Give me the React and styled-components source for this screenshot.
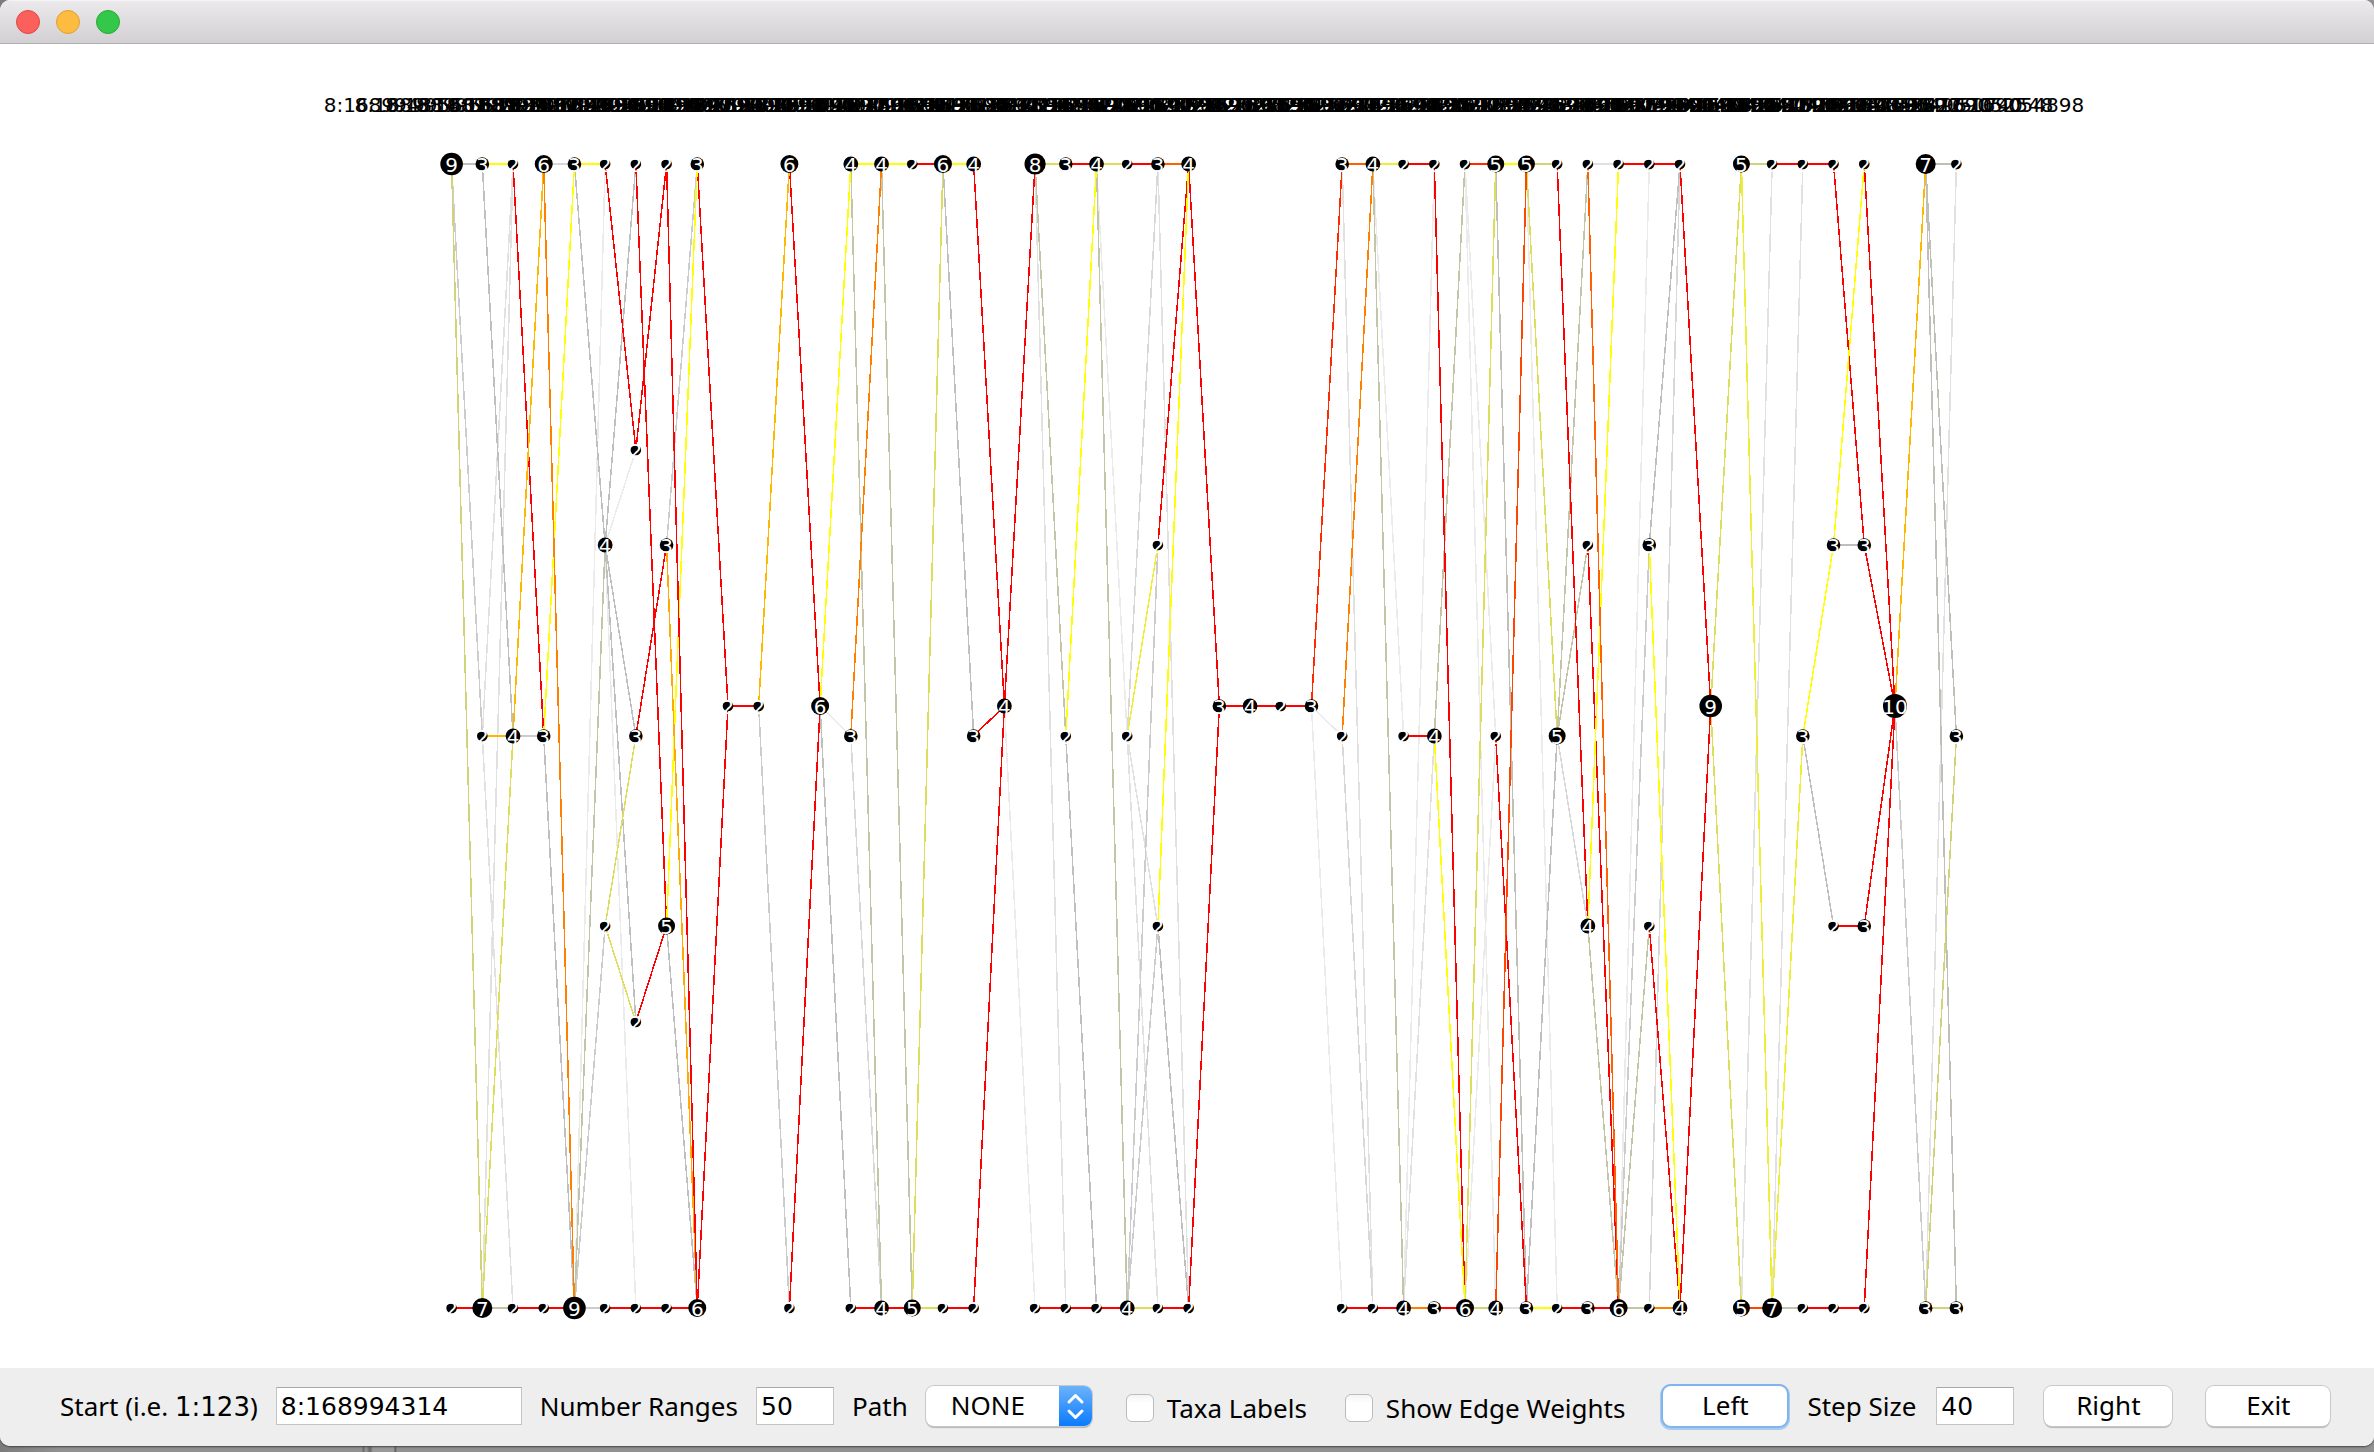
import React from "react";
import styled, { createGlobalStyle } from "styled-components";

const GlobalStyle = createGlobalStyle`
  * { box-sizing: border-box; }
  body { margin: 0; background: #8e8e8e; }
`;

const UI_FONT = '"Noto Sans", "Open Sans", sans-serif';
const DIGIT_FONT = '"DejaVu Sans", "Noto Sans", sans-serif';

const Desktop = styled.div`
  min-height: 100vh;
  padding-bottom: 6px;
  background: linear-gradient(90deg, #7c7c7c 0, #919191 60px, #919191 362px, #666 363px, #999 366px, #666 370px, #999 373px, #999 394px, #555 395px, #919191 397px);
`;

const Window = styled.main`
  display: flex;
  flex-direction: column;
  overflow: hidden;
  border-radius: 10px;
  background: #fff;
  box-shadow: 0 1px 2px #444;
`;

const TitleBar = styled.header`
  display: flex;
  align-items: center;
  gap: 16px;
  height: 44px;
  padding-left: 16px;
  background: linear-gradient(#ebe9eb, #d2d0d2);
  border-top: 1px solid #f5f4f5;
  border-bottom: 1px solid #b0aeb0;
`;

const Light = styled.button`
  width: 24px;
  height: 24px;
  padding: 0;
  border-radius: 50%;
  border: 1px solid ${(p) => p.$edge};
  background: ${(p) => p.$fill};
`;

const Graph = styled.svg`
  display: block;
  width: 100%;
  height: auto;
`;

const Edge = styled.line`
  stroke-width: ${(p) => (p.$flat ? 2 : 1.5)}px;
  shape-rendering: crispEdges;
`;

const Count = styled.text`
  font: 20px ${DIGIT_FONT};
  fill: #fff;
  text-anchor: middle;
`;

const RangeLabel = styled.text`
  font: 20px ${DIGIT_FONT};
  fill: #000;
  text-anchor: middle;
`;

const Controls = styled.form`
  display: flex;
  align-items: center;
  gap: 34px;
  height: 78px;
  padding: 0 40px 2px 60px;
  background: #eee;
  font: 26px/36px ${UI_FONT};
  color: #000;
  white-space: nowrap;
`;

const Group = styled.div`
  display: flex;
  align-items: center;
  gap: ${(p) => p.$gap}px;
`;

const Digits = styled.span`
  font-family: ${DIGIT_FONT};
`;

const Input = styled.input`
  width: ${(p) => p.$width}px;
  height: 38px;
  padding: 0 4px;
  border: 1px solid #c4c4c4;
  border-top: 1px solid #a8a8a8;
  border-radius: 0;
  background: #fff;
  font: 25px ${DIGIT_FONT};
  color: #000;
`;

const SelectBox = styled.div`
  display: grid;
  grid-template-columns: 1fr 33px;
  width: 166px;
  height: 40px;
  border-radius: 8px;
  overflow: hidden;
  background: #fff;
  box-shadow: 0 0 0 1px #c8c8c8, 0 2px 1px #b4b4b4;
`;

const Select = styled.select`
  grid-area: 1 / 1 / 2 / 3;
  appearance: none;
  padding: 0 0 3px 25px;
  border: 0;
  background: transparent;
  font: 26px ${UI_FONT};
  color: #000;
`;

const Stepper = styled.svg`
  grid-area: 1 / 2 / 2 / 3;
  width: 33px;
  height: 40px;
  background: linear-gradient(#6cb3fa, #0a7aff);
  pointer-events: none;
`;

const Check = styled.input`
  appearance: none;
  width: 28px;
  height: 28px;
  margin: 0;
  border: 1px solid #bcbcbc;
  border-radius: 6px;
  background: linear-gradient(#f4f4f4, #fff 30%);
`;

const Choice = styled.label`
  display: flex;
  align-items: center;
  gap: 13px;
  padding: 4px 4px 0 0;
`;

const Button = styled.button`
  width: ${(p) => p.$width}px;
  height: 40px;
  padding: 0 0 3px;
  border: 0;
  border-radius: 8px;
  background: #fff;
  box-shadow: ${(p) =>
    p.$focused
      ? "0 0 0 2px #7fb4ee, 0 1px 0 3px #a9cbf0"
      : "0 0 0 1px #c8c8c8, 0 2px 1px #b4b4b4"};
  font: 26px ${UI_FONT};
  color: #000;
`;

/* Graph rows, measured from the top of the canvas. */
const ROWS = { T: 120, A: 406, B: 501, C: 662, D: 692, E: 882, F: 978, G: 1264 };
const colX = (c) => 451.6 + c * 30.71;

const RADII = { 2: 5.3, 3: 6.8, 4: 7.4, 5: 8.5, 6: 9, 7: 10, 8: 10.6, 9: 11.3, 10: 12 };

/* column:taxa count for each row */
const NODES = {
  T: "0:9 1:3 2:2 3:6 4:3 5:2 6:2 7:2 8:3 11:6 13:4 14:4 15:2 16:6 17:4 19:8 20:3 21:4 22:2 23:3 24:4 29:3 30:4 31:2 32:2 33:2 34:5 35:5 36:2 37:2 38:2 39:2 40:2 42:5 43:2 44:2 45:2 46:2 48:7 49:2",
  A: "6:2",
  B: "5:4 7:3 23:2 37:2 39:3 45:3 46:3",
  C: "9:2 10:2 12:6 18:4 25:3 26:4 27:2 28:3 41:9 47:10",
  D: "1:2 2:4 3:3 6:3 13:3 17:3 20:2 22:2 29:2 31:2 32:4 34:2 36:5 44:3 49:3",
  E: "5:2 7:5 23:2 37:4 39:2 45:2 46:3",
  F: "6:2",
  G: "0:2 1:7 2:2 3:2 4:9 5:2 6:2 7:2 8:6 11:2 13:2 14:4 15:5 16:2 17:2 19:2 20:2 21:2 22:4 23:2 24:2 29:2 30:2 31:4 32:3 33:6 34:4 35:3 36:2 37:3 38:6 39:2 40:4 42:5 43:7 44:2 45:2 46:2 48:3 49:3",
};

/* Later colours are painted over earlier ones. */
const EDGES = [
  ["#ebebeb", "5T-4G 6A-5B 5B-6G 12C-13D 18C-19G 21T-22D 28C-29D 28C-29G 30T-31D 32T-31G 33T-34D 33T-34G 35T-36G 34D-33G 39T-38G"],
  ["#e1e1e1", "2T-1D 2T-1G 1D-2G 19T-20G 23T-24G 22D-23E 22D-23G 29T-30G 32D-31G 34G-35G 37T-38T 43T-42G 44T-43G 49T-48G"],
  ["#d8d8d8", "3T-4T 13D-14G 23T-22D 29D-30G 36D-37E 40T-39G"],
  ["#cccccc", "0T-1D 2D-3D 7B-8T 5E-4G 4G-5G 10C-11G 23B-22G 23E-22G 39B-38G 47C-48G"],
  ["#bfbfbf", "0T-1T 1T-2D 3D-4G 4T-5B 5B-6T 5B-6D 5B-6F 7E-8G 12C-13G 16T-17D 20D-21G 23E-24G 36D-35G 40T-39B 45B-46B 44D-45E"],
  ["#bfbfb8", "34T-35G 48T-49T 48T-49D 48T-49G"],
  ["#c4c4a6", "1G-2G 5B-4G 13T-14G 14T-15G 19T-20D 21T-22G 30T-31G 32D-33T 36D-37T 36D-37B 37E-38G 39E-38G 38G-39G 43G-44G"],
  ["#d2d278", "0T-1G 35T-36T 42T-43T 33G-34G 49D-48G 48G-49G"],
  ["#dede5c", "2D-1G 6D-5E 5E-6F 15G-16T 15G-16G 19T-20T 21T-22T 22G-23G 34T-33G 35T-36D 41C-42T 41C-42G"],
  ["#eeee38", "30T-31T 44D-43G 23B-22D 42T-43G"],
  ["#ff0000", "0G-1G 2G-3G 3G-4G 2T-3D 5T-6A 6A-7T 6T-7E 7B-6D 6F-7E 5G-6G 6G-7G 7G-8G 8T-9C 8G-9C 9C-10C 11T-12C 11G-12C 15T-16T 17T-18C 17D-18C 18C-17G 18C-19T 13G-14G 14G-15G 16G-17G 20T-21T 22T-23T 24T-23B 24T-25C 19G-20G 20G-21G 21G-22G 23G-24G 24G-25C 25C-26C 26C-27C 27C-28C 31T-32T 31D-32D 32T-33G 36T-37E 37B-38G 38T-39T 39T-40T 40T-41C 39E-40G 40G-41C 29G-30G 30G-31G 32G-33G 36G-37G 37G-38G 43T-44T 44T-45T 45T-46B 46T-47C 46B-47C 45E-46E 46E-47C 46G-47C 44G-45G 45G-46G"],
  ["#ffff00", "1T-2T 3D-4T 4T-5T 7E-8T 12C-13T 13T-14T 14T-15T 16T-17T 21T-20D 24T-23E 34T-35T 35G-36G 32D-33G 37E-38T 39B-40G 46T-45B 45B-44D"],
  ["#ffb800", "1D-2D 2D-3T 10C-11T 47C-48T"],
  ["#ffaa00", "7B-8G"],
  ["#ff0000", "7T-8G 34D-35G"],
  ["#ff8000", "3T-4G 13D-14T 29D-30T 31G-32G 39G-40G"],
  ["#ff6000", "23T-24T 29T-30T 37T-38G"],
  ["#ff4600", "35T-34G 42G-43G"],
  ["#ff2a00", "28C-29T 33T-34T"],
];

const parsePoint = (key) => ({
  x: colX(parseInt(key, 10)),
  y: ROWS[key.slice(-1)],
});

const edges = EDGES.flatMap(([color, list]) =>
  list.split(" ").map((pair) => {
    const [from, to] = pair.split("-").map(parsePoint);
    return { color, from, to, id: color + pair };
  })
);

const nodes = Object.entries(NODES).flatMap(([row, list]) =>
  list.split(" ").map((item) => {
    const [col, count] = item.split(":").map(Number);
    return { id: row + col, x: colX(col), y: ROWS[row], count };
  })
);

const LAST_STOPS = { 46: 169049670, 47: 169050740, 48: 169052548, 49: 169054898 };

const ranges = Array.from({ length: 50 }, (_, i) => {
  const start = 168994314 + i * 1187;
  return `8:${start}-${LAST_STOPS[i] || start + 1093}`;
});

function HaplotypeGraph() {
  return (
    <Graph viewBox="0 0 2374 1324" role="img" aria-label="Haplotype graph">
      {ranges.map((text, i) => (
        <RangeLabel key={text} x={colX(i)} y={68}>
          {text}
        </RangeLabel>
      ))}
      {edges.map((e) => (
        <Edge
          key={e.id}
          x1={e.from.x}
          y1={e.from.y}
          x2={e.to.x}
          y2={e.to.y}
          stroke={e.color}
          $flat={e.from.y === e.to.y}
        />
      ))}
      {nodes.map((n) => (
        <g key={n.id}>
          <circle cx={n.x} cy={n.y} r={RADII[n.count]} />
          <Count x={n.x} y={n.y + 8}>
            {n.count}
          </Count>
        </g>
      ))}
    </Graph>
  );
}

export default function App() {
  return (
    <Desktop>
      <GlobalStyle />
      <Window>
        <TitleBar>
          <Light aria-label="Close" $fill="#fc605c" $edge="#df4744" />
          <Light aria-label="Minimize" $fill="#fdbc40" $edge="#de9f34" />
          <Light aria-label="Zoom" $fill="#34c84a" $edge="#27aa35" />
        </TitleBar>
        <HaplotypeGraph />
        <Controls onSubmit={(e) => e.preventDefault()}>
          <Group $gap={18}>
            <label htmlFor="start">
              Start (i.e. <Digits>1:123</Digits>)
            </label>
            <Input id="start" $width={246} defaultValue="8:168994314" />
            <label htmlFor="ranges">Number Ranges</label>
            <Input id="ranges" $width={78} defaultValue="50" />
            <label htmlFor="path">Path</label>
            <SelectBox>
              <Select id="path" defaultValue="NONE">
                <option>NONE</option>
              </Select>
              <Stepper viewBox="0 0 33 40" fill="none" stroke="#fff" strokeWidth="3" strokeLinecap="round" strokeLinejoin="round">
                <path d="M10 16l6.500-6.500L23 16M10 25l6.500 6.500L23 25" />
              </Stepper>
            </SelectBox>
          </Group>
          <Choice>
            <Check type="checkbox" />
            Taxa Labels
          </Choice>
          <Choice>
            <Check type="checkbox" />
            Show Edge Weights
          </Choice>
          <Group $gap={30}>
            <Group $gap={20}>
              <Button type="button" $width={124} $focused>
                Left
              </Button>
              <label htmlFor="step">Step Size</label>
              <Input id="step" $width={78} defaultValue="40" />
            </Group>
            <Button type="button" $width={128}>
              Right
            </Button>
          </Group>
          <Button type="button" $width={124}>
            Exit
          </Button>
        </Controls>
      </Window>
    </Desktop>
  );
}
